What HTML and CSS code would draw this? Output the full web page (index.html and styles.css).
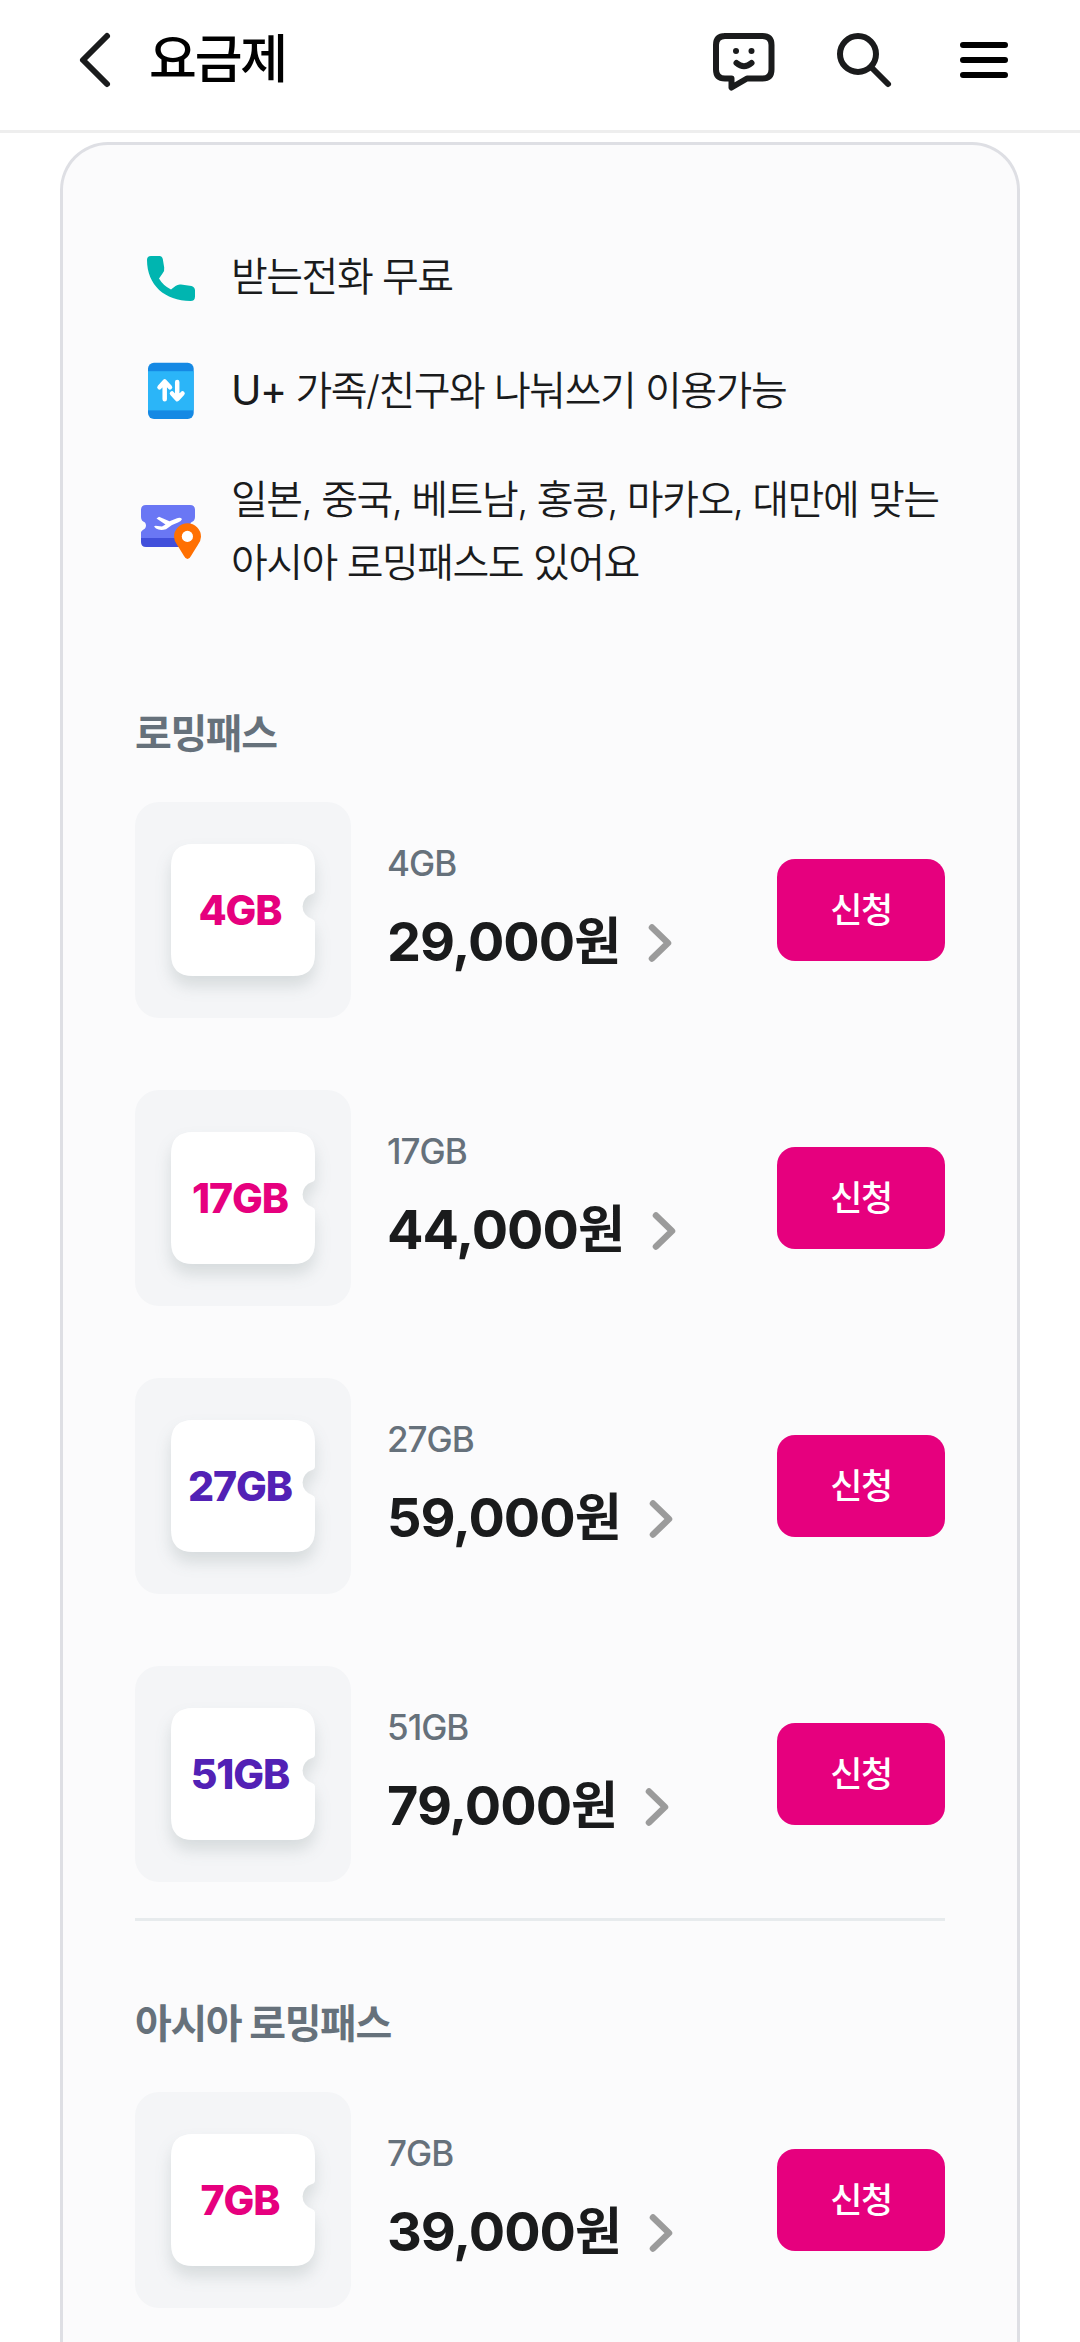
FILE: index.html
```html
<!DOCTYPE html>
<html lang="ko">
<head>
  <meta charset="UTF-8">
  <meta name="viewport" content="width=device-width, initial-scale=1.0">
  <title>요금제</title>
  <link rel="stylesheet" href="styles.css">
</head>
<body>
  <!-- Shared icons -->
  <svg class="sprite" width="0" height="0" aria-hidden="true">
    <symbol id="icon-chevron" viewBox="0 0 48 48">
      <path d="M16 9.500L32 25L16 40.500" fill="none" stroke="#9b9b9b" stroke-width="6.500" stroke-linecap="round" stroke-linejoin="round"/>
    </symbol>
    <symbol id="icon-ticket" viewBox="0 0 216 216">
      <path d="M58 42H158Q180 42 180 64V88Q180 91 177 92A13 13 0 0 0 177 117Q180 118 180 121V152Q180 174 158 174H58Q36 174 36 152V64Q36 42 58 42Z" fill="#fff"/>
    </symbol>
  </svg>

  <header class="header">
    <button class="icon-button back" aria-label="뒤로">
      <svg width="72" height="72" viewBox="0 0 72 72"><path d="M47 12L23 36L47 60" fill="none" stroke="#1a1b1c" stroke-width="6" stroke-linecap="round" stroke-linejoin="round"/></svg>
    </button>
    <h1>요금제</h1>
    <nav class="header-menu">
      <button class="icon-button" aria-label="챗봇">
        <svg width="72" height="72" viewBox="0 0 72 72" fill="none" stroke="#1a1b1c" stroke-width="6" stroke-linecap="round" stroke-linejoin="round">
          <path d="M16.500 12H54.500Q63.500 12 63.500 21V45.500Q63.500 54.500 54.500 54.500H39L23.500 63.500V54.500H17Q8 54.500 8 45.500V21Q8 12 17 12"/>
          <path d="M28.500 39Q36 45.500 43.500 39"/>
          <circle cx="28" cy="27" r="3" fill="#1a1b1c" stroke="none"/>
          <circle cx="43.500" cy="27" r="3" fill="#1a1b1c" stroke="none"/>
        </svg>
      </button>
      <button class="icon-button" aria-label="검색">
        <svg width="72" height="72" viewBox="0 0 72 72" fill="none" stroke="#1a1b1c" stroke-width="6" stroke-linecap="round">
          <circle cx="30" cy="30" r="18"/>
          <path d="M44 44L60 60"/>
        </svg>
      </button>
      <button class="icon-button" aria-label="전체메뉴">
        <svg width="72" height="72" viewBox="0 0 72 72" stroke="#000" stroke-width="6" stroke-linecap="round"><path d="M15 21H57M15 36H57M15 51H57"/></svg>
      </button>
    </nav>
  </header>

  <main class="card">
    <ul class="benefits">
      <li>
        <svg width="72" height="72" viewBox="0 0 72 72"><path d="M12 18Q12 14 16 14H24.500Q27 14 27.800 17L29.200 25.500Q29.800 29 27.500 31.500L24 36.500Q28 43.500 36 47.500L40.500 44Q43 42 46 42.500L56.500 44Q60 45 60 48.500V54.500Q60 59 55.500 59C30 59 12 43 12 18Z" fill="#00b5b0"/></svg>
        <p>받는전화 무료</p>
      </li>
      <li>
        <svg width="72" height="72" viewBox="0 0 72 72">
          <rect x="13" y="6.700" width="45.700" height="56.300" rx="6" fill="#1589e4"/>
          <rect x="13" y="15.200" width="45.700" height="39.200" fill="#2bb5f8"/>
          <path d="M29.700 43.200V26M24.500 31.300L29.700 25.500L35 31.300M42.200 26V43M37 37.500L42.200 43.200L47.500 37.500" fill="none" stroke="#fff" stroke-width="4.500" stroke-linecap="round" stroke-linejoin="round"/>
        </svg>
        <p><span class="latin">U+</span> 가족/친구와 나눠쓰기 이용가능</p>
      </li>
      <li>
        <svg width="72" height="72" viewBox="0 0 72 72">
          <path d="M6 35Q7 33 10 31.500Q12 28.500 10 25.500Q6 24 6 20V13Q6 8 11 8H55Q60 8 60 13V20Q60 24 56 25.500Q54 28.500 56 31.500L60 35V41H6Z" fill="#6a77f4"/>
          <path d="M6 41H60V45Q60 50 55 50H11Q6 50 6 45Z" fill="#414fdb"/>
          <path d="M21.500 21.500L24 19.800L34.500 24.300L42 21.200Q45.500 20.200 47 22Q46.500 24 43 25.500L37 28L31 32.200Q25 34 21 31.500L19 29.500L20.500 28.800L27 29.500L30.500 27.500Z" fill="#fff"/>
          <path d="M52.500 62Q50.500 62 49 59Q46 54 42.500 48.500Q39 44 39 39.800A13.500 13.500 0 0 1 66 39.800Q66 44 62.500 48.500Q59 54 56 59Q54.500 62 52.500 62Z" fill="#ff7002"/>
          <circle cx="52.400" cy="39.400" r="5.600" fill="#fff"/>
        </svg>
        <p>일본, 중국, 베트남, 홍콩, 마카오, 대만에 맞는<br>아시아 로밍패스도 있어요</p>
      </li>
    </ul>

    <section class="pass-group">
      <h2>로밍패스</h2>
      <ul class="pass-list">
        <li class="pass">
          <div class="thumb"><svg><use href="#icon-ticket"/></svg><span>4GB</span></div>
          <div class="info">
            <p class="data">4GB</p>
            <a class="price">29,000<em>원</em><svg><use href="#icon-chevron"/></svg></a>
          </div>
          <button class="apply">신청</button>
        </li>
        <li class="pass">
          <div class="thumb"><svg><use href="#icon-ticket"/></svg><span>17GB</span></div>
          <div class="info">
            <p class="data">17GB</p>
            <a class="price">44,000<em>원</em><svg><use href="#icon-chevron"/></svg></a>
          </div>
          <button class="apply">신청</button>
        </li>
        <li class="pass">
          <div class="thumb purple"><svg><use href="#icon-ticket"/></svg><span>27GB</span></div>
          <div class="info">
            <p class="data">27GB</p>
            <a class="price">59,000<em>원</em><svg><use href="#icon-chevron"/></svg></a>
          </div>
          <button class="apply">신청</button>
        </li>
        <li class="pass">
          <div class="thumb purple"><svg><use href="#icon-ticket"/></svg><span>51GB</span></div>
          <div class="info">
            <p class="data">51GB</p>
            <a class="price">79,000<em>원</em><svg><use href="#icon-chevron"/></svg></a>
          </div>
          <button class="apply">신청</button>
        </li>
      </ul>
    </section>

    <section class="pass-group">
      <h2>아시아 로밍패스</h2>
      <ul class="pass-list">
        <li class="pass">
          <div class="thumb"><svg><use href="#icon-ticket"/></svg><span>7GB</span></div>
          <div class="info">
            <p class="data">7GB</p>
            <a class="price">39,000<em>원</em><svg><use href="#icon-chevron"/></svg></a>
          </div>
          <button class="apply">신청</button>
        </li>
      </ul>
    </section>
  </main>
</body>
</html>
```
FILE: styles.css
```css
* {
  box-sizing: border-box;
  margin: 0;
  padding: 0;
}

body {
  height: 2342px;
  overflow: hidden;
  display: flex;
  flex-direction: column;
  background-color: #ffffff;
  color: #1a1b1c;
  font-family: 'Inter', 'Noto Sans CJK KR', sans-serif;
}

ul {
  list-style: none;
}

svg {
  display: block;
  flex: none;
}

button {
  border: none;
  background: none;
  font-family: inherit;
  cursor: pointer;
}

.sprite {
  display: none;
}

/* Header */
.header {
  flex: none;
  display: flex;
  align-items: center;
  height: 133px;
  padding: 0 60px 10px;
  border-bottom: 3px solid #eeeeee;
}

.icon-button {
  width: 72px;
  height: 72px;
}

.header h1 {
  margin-left: 17px;
  color: #000000;
  font-size: 52px;
  font-weight: 500;
  letter-spacing: -2.2px;
  line-height: 72px;
}

.header-menu {
  display: flex;
  gap: 48px;
  margin-left: auto;
}

/* Card */
.card {
  flex: 1;
  margin: 9px 60px 0;
  padding: 97px 72px 0;
  border: 3px solid #dedfe4;
  border-bottom: none;
  border-radius: 48px 48px 0 0;
  background-color: #fbfbfc;
}

.benefits {
  display: flex;
  flex-direction: column;
  gap: 42px;
}

.benefits li {
  display: flex;
  align-items: center;
  gap: 24px;
}

.benefits p {
  margin: -2px 0 2px;
  font-size: 40px;
  font-weight: 350;
  line-height: 63px;
  letter-spacing: -1.5px;
  white-space: nowrap;
}

.benefits .latin {
  font-size: 41px;
  font-weight: 400;
}

/* Passes */
.pass-group {
  padding-top: 107px;
}

.pass-group + .pass-group {
  margin-top: 36px;
  padding-top: 72px;
  border-top: 3px solid #e7ebed;
}

.pass-group h2 {
  color: #66717b;
  font-size: 40px;
  font-weight: 700;
  letter-spacing: -1.4px;
  line-height: 62px;
  margin-bottom: 37px;
}

.pass-list {
  display: flex;
  flex-direction: column;
  gap: 72px;
}

.pass {
  display: flex;
  align-items: center;
}

.thumb {
  display: grid;
  place-items: center;
  width: 216px;
  height: 216px;
  margin-right: 36px;
  border-radius: 24px;
  background-color: #f4f5f7;
  color: #e6007e;
}

.thumb.purple {
  color: #5221b5;
}

.thumb svg,
.thumb span {
  grid-area: 1 / 1;
}

.thumb svg {
  width: 216px;
  height: 216px;
  filter: drop-shadow(0 10px 8px rgba(50, 75, 75, 0.15));
}

.thumb span {
  z-index: 1;
  padding-right: 6px;
  font-size: 41px;
  font-weight: 800;
  letter-spacing: -1.1px;
}

.info {
  flex: 1;
}

.data {
  color: #66717b;
  font-size: 35px;
  font-weight: 450;
  letter-spacing: -1px;
  line-height: 50px;
}

.price {
  display: flex;
  align-items: center;
  margin-top: 13px;
  font-size: 54px;
  font-weight: 700;
  letter-spacing: -1px;
  line-height: 81px;
}

.price em {
  font-size: 51px;
  font-style: normal;
}

.price svg {
  width: 48px;
  height: 48px;
  margin-left: 16px;
}

.apply {
  width: 168px;
  height: 102px;
  padding-bottom: 5px;
  border-radius: 18px;
  background-color: #e6007e;
  color: #ffffff;
  font-size: 35px;
  font-weight: 500;
  letter-spacing: -1.5px;
}
```
